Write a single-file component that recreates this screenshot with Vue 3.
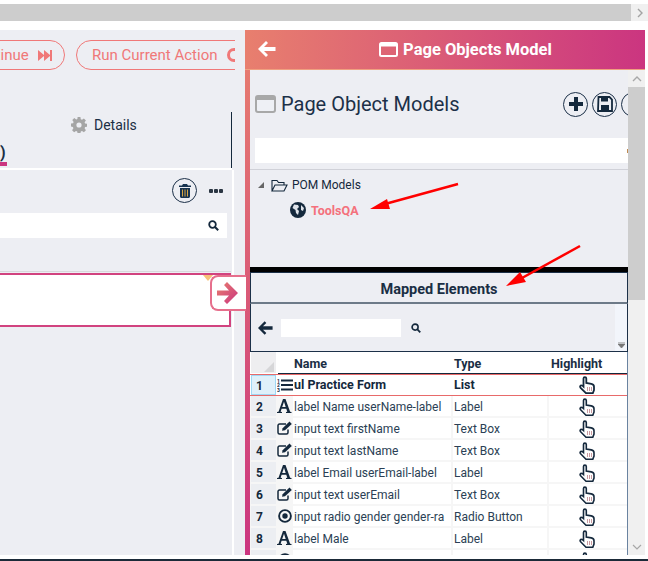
<script setup>
const rows = [
  { n: 2, icon: 'font', name: 'label Name userName-label', type: 'Label' },
  { n: 3, icon: 'edit', name: 'input text firstName', type: 'Text Box' },
  { n: 4, icon: 'edit', name: 'input text lastName', type: 'Text Box' },
  { n: 5, icon: 'font', name: 'label Email userEmail-label', type: 'Label' },
  { n: 6, icon: 'edit', name: 'input text userEmail', type: 'Text Box' },
  { n: 7, icon: 'radio', name: 'input radio gender gender-ra', type: 'Radio Button' },
  { n: 8, icon: 'font', name: 'label Male', type: 'Label' },
  { n: 9, icon: 'radio', name: 'input radio gender gender-ra', type: 'Radio Button' }
]
</script>

<template>
  <div class="page">
    <div class="top-scroll">
      <div class="top-track"></div>
      <div class="top-btn">
        <svg width="8" height="10" viewBox="0 0 8 10"><path d="M2 1l4 4-4 4" fill="none" stroke="#a3a3a3" stroke-width="1.4" /></svg>
      </div>
    </div>

    <div class="main">
      <section class="left">
        <div class="run-bar">
          <button class="run-btn first">
            Continue
            <svg width="14" height="11" viewBox="0 0 14 11"><path d="M0 0l6 5V0l6 5V0h2v11h-2V6l-6 5V6l-6 5z" fill="#f07878" /></svg>
          </button>
          <button class="run-btn second">Run Current Action <span class="run-dot"></span></button>
        </div>

        <div class="tabs">
          <div class="tab-details">
            <svg width="16" height="16" viewBox="0 0 16 16"><path d="M6.600 0h2.800l.4 2.200 1.200.5 1.900-1.300 2 2-1.300 1.900.5 1.200 2.200.4v2.800l-2.200.4-.5 1.200 1.300 1.900-2 2-1.900-1.300-1.200.5-.4 2.200H6.600l-.4-2.200-1.200-.5-1.900 1.300-2-2 1.300-1.900-.5-1.200L0 9.400V6.600l2.100-.4.500-1.200-1.300-1.900 2-2 1.900 1.300 1.200-.5zM8 5.400a2.600 2.600 0 1 0 0 5.200 2.600 2.600 0 0 0 0-5.200z" fill="#a5a5a5" fill-rule="evenodd" /></svg>
            <span>Details</span>
          </div>
          <span class="tab-active">)</span>
        </div>

        <div class="actions-panel">
          <div class="actions-head">
            <span class="circle-btn">
              <svg width="12" height="14" viewBox="0 0 12 14"><path d="M4 0h4l1 1.500h3V3H0V1.500h3zM1 4h10v8.500c0 .8-.7 1.500-1.500 1.500h-7C1.700 14 1 13.300 1 12.500z" fill="#16324f" /><path d="M3.500 5.500v7M6 5.500v7M8.500 5.500v7" stroke="#d9a441" stroke-width="1" /></svg>
            </span>
            <span class="dots"><i></i><i></i><i></i></span>
          </div>
          <div class="left-search">
            <svg width="11" height="11" viewBox="0 0 11 11"><circle cx="4.500" cy="4.500" r="3.300" fill="none" stroke="#14283c" stroke-width="1.800" /><path d="M7 7l3.200 3.200" stroke="#14283c" stroke-width="2" /></svg>
          </div>
          <div class="action-card">
            <span class="corner"></span>
          </div>
        </div>
      </section>

      <section class="right">
        <header class="pom-header">
          <svg class="back" width="18" height="16" viewBox="0 0 18 16"><path d="M8 0l2 2-4 4h11.500v4H6l4 4-2 2-8-8z" fill="#fff" /></svg>
          <div class="pom-title">
            <svg width="19" height="15" viewBox="0 0 19 15"><rect x="1" y="1" width="17" height="13" rx="1.500" fill="none" stroke="#fff" stroke-width="2" /><rect x="1" y="1" width="17" height="3.500" fill="#fff" /></svg>
            <span>Page Objects Model</span>
          </div>
        </header>

        <div class="pom-body">
          <div class="pom-content">
            <div class="title-row">
              <svg class="title-icon" width="21" height="18" viewBox="0 0 21 18"><rect x="1" y="1" width="19" height="16" rx="2" fill="#eef0f5" stroke="#a8a8a8" stroke-width="2" /><rect x="1" y="1" width="19" height="4" fill="#a8a8a8" /></svg>
              <h1>Page Object Models</h1>
              <div class="title-btns">
                <span class="circle-btn">
                  <svg width="16" height="16" viewBox="0 0 16 16"><path d="M6 1h4v5h5v4h-5v5H6v-5H1V6h5z" fill="#14283c" /></svg>
                </span>
                <span class="circle-btn">
                  <svg width="16" height="16" viewBox="0 0 16 16"><path d="M1.500 1h11L15 3.500v11.500H1z" fill="none" stroke="#14283c" stroke-width="1.800" /><rect x="4" y="1.500" width="7" height="4" fill="#14283c" /><rect x="4" y="9" width="8" height="5.500" fill="#14283c" /></svg>
                </span>
                <span class="circle-btn"><i class="third-mark"></i></span>
              </div>
            </div>
            <div class="pom-search"><i></i></div>

            <div class="tree">
              <div class="tree-root">
                <span class="caret"></span>
                <svg width="17" height="13" viewBox="0 0 17 13"><path d="M1 12V1.500h5l1.500 2H13V6M1 12l3-6h12l-3 6z" fill="none" stroke="#14283c" stroke-width="1.100" /></svg>
                <span>POM Models</span>
              </div>
              <div class="tree-leaf">
                <svg width="16" height="16" viewBox="0 0 16 16"><circle cx="8" cy="8" r="8" fill="#14283c" /><path d="M4 2.500l4 .5 1 2-2 2 2 2-1 4-2-2-.5-3-3-2zM11 3l3 3-1 3-2-1z" fill="#dfe3ea" /></svg>
                <span>ToolsQA</span>
              </div>
            </div>

            <div class="mapped">
              <div class="mapped-title">Mapped Elements</div>
              <div class="mapped-tools">
                <svg width="15" height="14" viewBox="0 0 18 16"><path d="M8 0l2 2-4 4h11.500v4H6l4 4-2 2-8-8z" fill="#14283c" /></svg>
                <div class="tool-input"></div>
                <svg width="10" height="10" viewBox="0 0 11 11"><circle cx="4.500" cy="4.500" r="3.300" fill="none" stroke="#14283c" stroke-width="1.800" /><path d="M7 7l3.200 3.200" stroke="#14283c" stroke-width="2" /></svg>
                <div class="tool-scroll">
                  <svg width="7" height="6" viewBox="0 0 7 6"><path d="M0 0h7M0 2h7l-3.500 4z" stroke="#777" stroke-width=".8" fill="#777" /></svg>
                </div>
              </div>
            </div>
          </div>

          <div class="v-scroll">
            <div class="v-btn">
              <svg width="10" height="7" viewBox="0 0 10 7"><path d="M1 6l4-4 4 4" fill="none" stroke="#a8a8a8" stroke-width="1.400" /></svg>
            </div>
            <div class="v-thumb"></div>
            <div class="v-rest">
              <svg width="10" height="7" viewBox="0 0 10 7"><path d="M1 1l4 4 4-4" fill="none" stroke="#a8a8a8" stroke-width="1.200" /></svg>
            </div>
          </div>

          <div class="grid">
            <div class="grid-head">
              <div class="head-corner"><span></span></div>
              <div class="head-cols">
                <b class="h-name">Name</b>
                <b class="h-type">Type</b>
                <b class="h-hl">Highlight</b>
              </div>
            </div>

            <div class="grid-row selected">
              <div class="row-num">1</div>
              <div class="c-icon">
                <svg width="16" height="14" viewBox="0 0 16 14"><text x="0" y="4.500" font-size="5" font-weight="700" fill="#14283c">1</text><text x="0" y="9" font-size="5" font-weight="700" fill="#14283c">2</text><text x="0" y="13.500" font-size="5" font-weight="700" fill="#14283c">3</text><path d="M4 2.500h12M4 7h12M4 11.500h12" stroke="#14283c" stroke-width="2.200" /></svg>
              </div>
              <div class="c-name">ul Practice Form</div>
              <div class="c-type">List</div>
              <div class="c-hl">
                <svg width="17" height="18" viewBox="0 0 17 18"><path d="M4.500 9V2.500a1.400 1.400 0 0 1 2.800 0V7l5 .9c1.500.3 2.700 1.300 2.700 2.800V14l-1.200 3.200H7L1.600 11.800c-1-1-.3-2.500 1-2.400.8 0 1.300.5 1.900 1.100z" fill="#fff" stroke="#14283c" stroke-width="1.800" /><path d="M8.500 11v4M10.500 11v4M12.500 11v4" stroke="#c99aa0" /></svg>
              </div>
            </div>

            <div v-for="r in rows" :key="r.n" class="grid-row">
              <div class="row-num">{{ r.n }}</div>
              <div class="c-icon">
                <svg v-if="r.icon === 'font'" width="15" height="14" viewBox="0 0 15 14"><path d="M0 14v-1l1.500-.3L6 0h2.500l4.600 12.700 1.400.3v1H9v-1l1.300-.3-1-3H4.600l-1 3 1.400.3v1zM5.200 8h3.500L7 2.800z" fill="#14283c" fill-rule="evenodd" /></svg>
                <svg v-else-if="r.icon === 'edit'" width="16" height="14" viewBox="0 0 16 14"><path d="M11 8.500v3c0 1-.7 1.500-1.500 1.500h-7C1.700 13 1 12.300 1 11.500v-7C1 3.700 1.700 3 2.500 3H9" fill="none" stroke="#14283c" stroke-width="1.500" /><path d="M5 9.800l.6-2.600L12.500.6l2.300 2.300-6.800 6.400z" fill="#14283c" /></svg>
                <svg v-else width="14" height="14" viewBox="0 0 14 14"><circle cx="7" cy="7" r="5.900" fill="none" stroke="#14283c" stroke-width="1.900" /><circle cx="7" cy="7" r="2.700" fill="#14283c" /></svg>
              </div>
              <div class="c-name">{{ r.name }}</div>
              <div class="c-type">{{ r.type }}</div>
              <div class="c-hl">
                <svg width="17" height="18" viewBox="0 0 17 18"><path d="M4.500 9V2.500a1.400 1.400 0 0 1 2.800 0V7l5 .9c1.500.3 2.700 1.300 2.700 2.800V14l-1.200 3.200H7L1.600 11.800c-1-1-.3-2.500 1-2.400.8 0 1.300.5 1.900 1.100z" fill="#fff" stroke="#14283c" stroke-width="1.600" /><path d="M8.500 11v4M10.500 11v4M12.500 11v4" stroke="#c99aa0" /></svg>
              </div>
            </div>
          </div>
        </div>
      </section>

      <div class="arrow-box">
        <svg width="22" height="22" viewBox="0 0 22 22"><defs><linearGradient id="ag" x1="0" y1="0" x2="1" y2="1"><stop offset="0" stop-color="#e87f6e" /><stop offset="1" stop-color="#cb3580" /></linearGradient></defs><path d="M10 0l11 11-11 11-3-3 5-5.500H0v-5h12L7 3z" fill="url(#ag)" /></svg>
      </div>
    </div>

    <div class="bottom-line"></div>

    <svg class="callouts" width="648" height="561" viewBox="0 0 648 561">
      <path d="M458 184L385 204" stroke="#f00" stroke-width="2.500" />
      <path d="M370 209l17-10 3 10z" fill="#f00" />
      <path d="M580 246L522 278" stroke="#f00" stroke-width="2.500" />
      <path d="M506 286l14-14 6 10z" fill="#f00" />
    </svg>
  </div>
</template>

<style>
html,
body {
  margin: 0;
  background: #fff;
}
</style>

<style scoped>
.page {
  position: relative;
  width: 648px;
  height: 561px;
  overflow: hidden;
  background: #fff;
  font-family: Roboto, "Noto Sans", sans-serif;
  color: #1a2e44;
  display: flex;
  flex-direction: column;
}

.top-scroll {
  display: flex;
  height: 17px;
  margin-top: 4px;
  margin-bottom: 9px;
  flex: none;
}
.top-track {
  flex: 1;
  background: #cdcdcd;
}
.top-btn {
  width: 17px;
  background: #f0f0f0;
  display: flex;
  align-items: center;
  justify-content: center;
}

.main {
  position: relative;
  flex: 1;
  min-height: 0;
  display: flex;
  align-items: stretch;
  padding-bottom: 4px;
}
.bottom-line {
  height: 2px;
  flex: none;
  background: #1b2a38;
}
.callouts {
  position: absolute;
  left: 0;
  top: 0;
  pointer-events: none;
}

/* left side */
.left {
  width: 245px;
  flex: none;
  background: #edeef3;
  overflow: hidden;
}
.run-bar {
  width: 235px;
  height: 30px;
  margin-top: 10px;
  display: flex;
  gap: 11px;
  overflow: hidden;
}
.run-btn {
  flex: none;
  height: 30px;
  box-sizing: border-box;
  border: 1px solid #f07878;
  border-radius: 15px;
  background: transparent;
  color: #f07878;
  font: 15px Roboto, sans-serif;
  white-space: nowrap;
  padding: 0;
  display: flex;
  align-items: center;
}
.run-btn.first {
  width: 125px;
  margin-left: -60px;
  padding-left: 28px;
  gap: 9px;
}
.run-btn.second {
  width: 190px;
  padding-left: 15px;
  gap: 10px;
}
.run-dot {
  flex: none;
  width: 14px;
  height: 14px;
  border: 3px solid #f07878;
  border-radius: 50%;
  box-sizing: border-box;
}
.tabs {
  position: relative;
  width: 232px;
  height: 58px;
  margin-top: 40px;
  box-sizing: border-box;
  padding-top: 4px;
}
.tabs::after {
  content: "";
  position: absolute;
  right: 0;
  top: 2px;
  bottom: 0;
  width: 1px;
  background: #14283c;
}
.tab-details {
  margin-left: 71px;
  height: 22px;
  display: flex;
  align-items: center;
  gap: 7px;
  font-size: 14px;
}
.tab-active {
  position: absolute;
  left: 0;
  top: 30px;
  width: 7px;
  height: 26px;
  box-sizing: border-box;
  border-bottom: 4px solid #cb3580;
  font-size: 16px;
  font-weight: 700;
  line-height: 25px;
}
.actions-panel {
  position: relative;
  width: 232px;
  height: 385px;
  margin-top: 2px;
  box-shadow: 2px 0 0 #fff, 0 -2px 0 #fff;
}
.actions-head {
  height: 43px;
  box-sizing: border-box;
  padding: 0 0 2px 172px;
  display: flex;
  align-items: center;
  gap: 12px;
}
.circle-btn {
  width: 25px;
  height: 25px;
  flex: none;
  box-sizing: border-box;
  border: 1px solid #1c3048;
  border-radius: 50%;
  display: flex;
  align-items: center;
  justify-content: center;
}
.dots {
  display: flex;
  gap: 1px;
}
.dots i {
  width: 4px;
  height: 4px;
  background: #2a3542;
  border-radius: 1px;
}
.left-search {
  width: 227px;
  height: 25px;
  background: #fff;
  display: flex;
  align-items: center;
  justify-content: flex-end;
  padding-right: 8px;
  box-sizing: border-box;
}
.action-card {
  position: relative;
  width: 231px;
  height: 54px;
  box-sizing: border-box;
  margin-top: 35px;
  background: #fff;
  border: 2px solid #d1437f;
  border-left: 0;
  box-shadow: 0 -1px 0 #edeef3, 0 -2px 0 #d8d8dc;
}
.corner {
  position: absolute;
  right: 16px;
  top: 0;
  border-top: 6px solid #f7c27a;
  border-left: 5px solid transparent;
  border-right: 5px solid transparent;
}
.arrow-box {
  position: absolute;
  left: 210px;
  top: 245px;
  width: 36px;
  height: 36px;
  box-sizing: border-box;
  background: #fff;
  border: 2px solid #e66f8c;
  border-right: 0;
  border-radius: 8px 0 0 8px;
  display: flex;
  align-items: center;
  padding-left: 5px;
}

/* right side */
.right {
  width: 400px;
  flex: none;
  display: flex;
  flex-direction: column;
  box-sizing: border-box;
  border-style: solid;
  border-width: 0 0 0 5px;
  border-image: linear-gradient(180deg, #e87f6e, #cb3580) 1;
  background: #edeef3;
}
.pom-header {
  position: relative;
  height: 40px;
  flex: none;
  margin-left: -5px;
  background: linear-gradient(90deg, #e87f6e, #cb3580);
  border-bottom: 1px solid #f0a080;
  box-sizing: border-box;
  display: flex;
  align-items: center;
  justify-content: center;
}
.back {
  position: absolute;
  left: 13px;
  top: 11px;
}
.pom-title {
  display: flex;
  align-items: center;
  gap: 5px;
  margin-left: 41px;
  color: #fff;
  font-weight: 700;
  font-size: 16.5px;
}
.pom-body {
  flex: 1;
  min-height: 0;
  display: grid;
  grid-template-columns: 378px 17px;
  grid-template-rows: 282px minmax(0, 1fr);
}
.pom-content {
  min-width: 0;
  overflow: hidden;
  background: #edeef3;
}
.title-row {
  height: 68px;
  display: flex;
  align-items: center;
  padding-left: 5px;
}
.title-icon {
  flex: none;
}
.title-row h1 {
  flex: 1;
  margin: 0 0 0 5px;
  font-size: 20px;
  font-weight: 400;
  color: #1c3048;
  white-space: nowrap;
}
.title-btns {
  flex: none;
  display: flex;
  gap: 4px;
  margin-right: -18px;
}
.third-mark {
  width: 10px;
  height: 10px;
  background: #f5e6b0;
  border-radius: 2px;
}
.pom-search {
  height: 25px;
  margin-left: 5px;
  background: #fff;
  display: flex;
  align-items: center;
  justify-content: flex-end;
}
.pom-search i {
  width: 1px;
  height: 4px;
  background: #c08a50;
}
.tree {
  height: 98px;
  box-sizing: border-box;
  margin-top: 6px;
  border-top: 1px solid #d0d1d8;
  font-size: 12px;
}
.tree-root {
  display: flex;
  align-items: center;
  height: 16px;
  margin-top: 7px;
  padding-left: 8px;
  color: #14283c;
}
.caret {
  width: 0;
  height: 0;
  border-bottom: 6px solid #666;
  border-left: 6px solid transparent;
  margin-right: 7px;
}
.tree-root svg {
  margin-right: 4px;
}
.tree-leaf {
  display: flex;
  align-items: center;
  gap: 5px;
  margin-top: 9px;
  padding-left: 40px;
  color: #f4717c;
  font-weight: 700;
  font-size: 12.5px;
}
.mapped {
  border-top: 5px solid #000;
}
.mapped-title {
  height: 32px;
  box-sizing: border-box;
  border: 1px solid #1c3048;
  border-bottom: 2px solid #6d7a88;
  text-align: center;
  line-height: 33px;
  font-size: 14.5px;
  font-weight: 700;
}
.mapped-tools {
  height: 48px;
  box-sizing: border-box;
  border: 1px solid #1c3048;
  border-top: 0;
  display: flex;
  align-items: center;
  padding-left: 7px;
}
.tool-input {
  width: 120px;
  height: 18px;
  margin: 0 10px 0 8px;
  background: #fff;
}
.tool-scroll {
  align-self: stretch;
  width: 12px;
  margin-left: auto;
  background: #f2f5fb;
  display: flex;
  align-items: flex-end;
  justify-content: center;
  padding-bottom: 3px;
}

.v-scroll {
  grid-column: 2;
  grid-row: 1 / 3;
  display: flex;
  flex-direction: column;
  background: #f0f0f0;
}
.v-btn {
  height: 17px;
  display: flex;
  align-items: center;
  justify-content: center;
}
.v-thumb {
  height: 213px;
  background: #cdcdcd;
}
.v-rest {
  flex: 1;
  display: flex;
  align-items: flex-end;
  justify-content: center;
  padding-bottom: 4px;
}

.grid {
  grid-column: 1;
  grid-row: 2;
  min-height: 0;
  overflow: hidden;
  background: #f6f6f6;
  border-right: 1px solid #6a83a0;
  font-size: 12px;
}
.grid-head {
  height: 22px;
  display: flex;
  background: #fff;
}
.head-corner {
  width: 25px;
  margin-left: 1px;
  height: 21px;
  background: #eeeef0;
  display: flex;
  align-items: flex-end;
  justify-content: flex-end;
}
.head-corner span {
  border-bottom: 10px solid #d6d6d8;
  border-left: 10px solid transparent;
  margin: 0 2px 1px 0;
}
.head-cols {
  position: relative;
  flex: 1;
  margin-left: 2px;
  height: 21px;
  border-bottom: 1px solid #14283c;
  line-height: 24px;
  font-size: 12.5px;
}
.head-cols b {
  position: absolute;
  top: 0;
}
.h-name {
  left: 16px;
}
.h-type {
  left: 176px;
}
.h-hl {
  left: 273px;
}
.grid-row {
  display: grid;
  grid-template-columns: 26px 17px 160px 96px 1fr;
  grid-template-rows: 22px;
  height: 22px;
}
.row-num {
  margin-left: 1px;
  margin-bottom: 2px;
  background: #eceef2;
  font-weight: 700;
  line-height: 22px;
  padding-left: 5px;
  color: #14283c;
  overflow: hidden;
}
.c-icon {
  display: flex;
  align-items: center;
  justify-content: center;
  padding-bottom: 2px;
  overflow: hidden;
}
.c-name,
.c-type,
.c-hl {
  margin-bottom: 2px;
  background: #fff;
  line-height: 22px;
  white-space: nowrap;
  overflow: hidden;
  color: #2b3f55;
}
.c-name,
.c-type {
  margin-right: 2px;
  padding-left: 1px;
}
.c-hl {
  display: flex;
  align-items: center;
  justify-content: center;
  padding: 2px 2px 0 0;
}
.grid-row.selected {
  box-sizing: border-box;
  grid-template-rows: 20px;
  background: #fff;
  border-top: 1px solid #e86a6a;
  border-bottom: 1px solid #e86a6a;
}
.selected .row-num {
  margin-bottom: 0;
  background: #dff0fa;
  box-shadow: inset 0 0 0 1px #9fd8f5;
  line-height: 22px;
}
.selected .c-icon {
  padding-bottom: 0;
}
.selected .c-name,
.selected .c-type {
  margin: 0;
  font-size: 12.5px;
  font-weight: 700;
  line-height: 20px;
  color: #14283c;
}
.selected .c-hl {
  margin: 0;
  padding: 0 2px 0 0;
}
</style>
